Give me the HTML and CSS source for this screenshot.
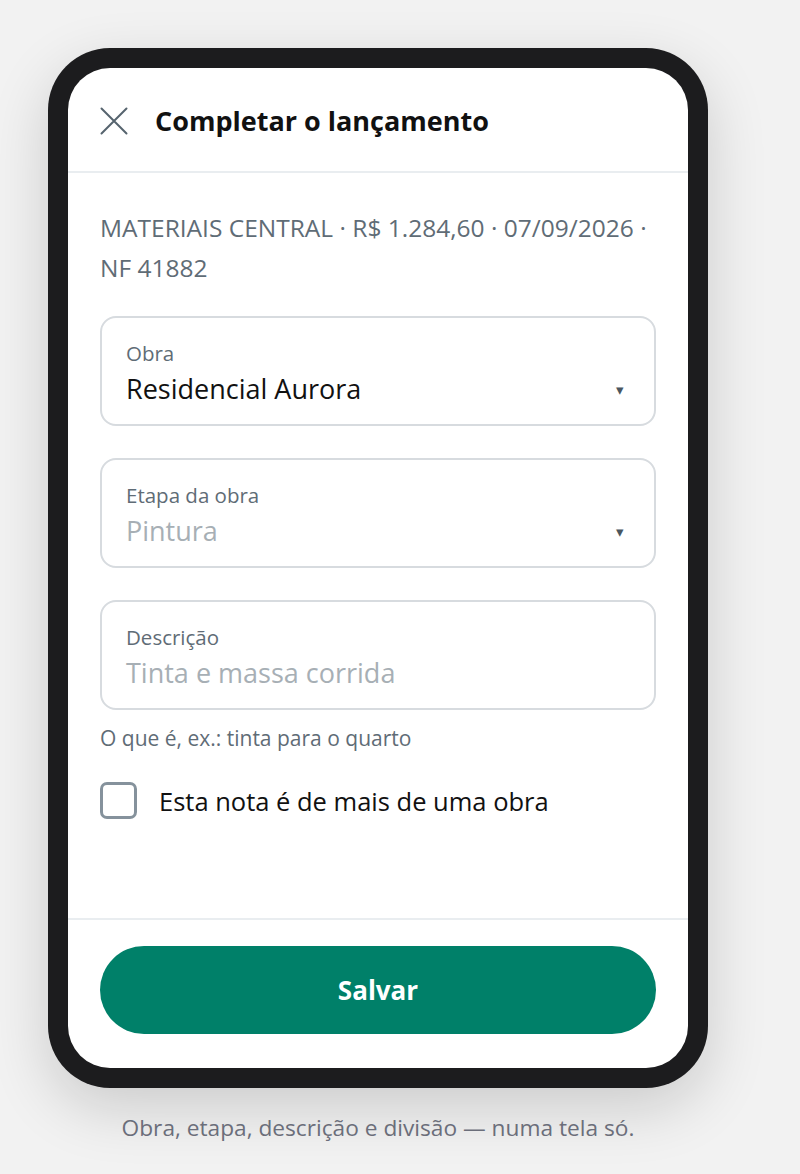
FILE: index.html
```html
<!DOCTYPE html>
<html lang="pt-BR">
<head>
    <meta charset="UTF-8">
    <meta name="viewport" content="width=device-width, initial-scale=1.0">
    <title>Completar o lançamento</title>
    <link rel="stylesheet" href="styles.css">
</head>
<body>

    <div class="stage">
        <div class="phone">
            <div class="screen">
                <header class="top-bar">
                    <button class="close-btn" aria-label="Fechar">
                        <svg width="28" height="28" viewBox="0 0 28 28">
                            <path d="M1.5 1.5 L26.5 26.5 M26.5 1.5 L1.5 26.5" stroke="#56646e" stroke-width="2" fill="none" stroke-linecap="round"/>
                        </svg>
                    </button>
                    <h1>Completar o lançamento</h1>
                </header>

                <main class="content">
                    <p class="summary">MATERIAIS CENTRAL · R$ 1.284,60 · 07/09/2026 · NF 41882</p>

                    <div class="field">
                        <span class="field-label">Obra</span>
                        <div class="field-row">
                            <span class="field-value">Residencial Aurora</span>
                            <span class="caret">▾</span>
                        </div>
                    </div>

                    <div class="field">
                        <span class="field-label">Etapa da obra</span>
                        <div class="field-row">
                            <span class="field-value placeholder">Pintura</span>
                            <span class="caret">▾</span>
                        </div>
                    </div>

                    <div class="field">
                        <span class="field-label">Descrição</span>
                        <div class="field-row">
                            <span class="field-value placeholder">Tinta e massa corrida</span>
                        </div>
                    </div>
                    <p class="hint">O que é, ex.: tinta para o quarto</p>

                    <label class="check-row">
                        <span class="checkbox"></span>
                        <span>Esta nota é de mais de uma obra</span>
                    </label>
                </main>

                <footer class="bottom-bar">
                    <button class="save-btn">Salvar</button>
                </footer>
            </div>
        </div>
        <p class="caption">Obra, etapa, descrição e divisão — numa tela só.</p>
    </div>

</body>
</html>
```

FILE: styles.css
```css
body {
    font-family: "Open Sans", "Noto Sans", sans-serif;
    margin: 0;
    padding: 0;
    background-color: #f2f2f2;
}

.stage {
    width: 660px;
    padding: 48px 0 40px 48px;
}

.phone {
    background-color: #1c1c1e;
    border-radius: 62px;
    padding: 20px;
    box-shadow: 0 20px 60px rgba(0, 0, 0, 0.16);
}

.screen {
    background-color: #fff;
    border-radius: 42px;
    height: 1000px;
    display: flex;
    flex-direction: column;
    overflow: hidden;
}

.top-bar {
    height: 101px;
    display: flex;
    align-items: center;
    gap: 27px;
    padding: 2px 32px 0;
    border-bottom: 2px solid #e9edf0;
}

.close-btn {
    background: none;
    border: none;
    padding: 0;
    width: 28px;
    height: 28px;
    cursor: pointer;
}

.top-bar h1 {
    margin: 0;
    font-size: 27px;
    font-weight: 700;
    color: #111;
}

.content {
    flex: 1;
    padding: 35px 32px 0;
}

.summary {
    margin: 0 0 28px;
    font-size: 24.5px;
    line-height: 40px;
    color: #5f6c76;
}

.field {
    border: 2px solid #d7dbdf;
    border-radius: 16px;
    height: 110px;
    box-sizing: border-box;
    padding: 22px 24px 0;
    margin-bottom: 32px;
}

.field-label {
    display: block;
    font-size: 20.5px;
    line-height: 26px;
    color: #5f6c76;
}

.field-row {
    display: flex;
    justify-content: space-between;
    align-items: center;
    margin-top: 5px;
}

.field-value {
    font-size: 27px;
    line-height: 36px;
    color: #111;
}

.field-value.placeholder {
    color: #a7afb5;
}

.caret {
    font-size: 15px;
    color: #4a5660;
    margin-right: 6px;
}

.hint {
    margin: -18px 0 30px;
    font-size: 21px;
    line-height: 28px;
    color: #5f6c76;
}

.check-row {
    display: flex;
    align-items: center;
    gap: 22px;
    font-size: 25.5px;
    color: #111;
    cursor: pointer;
}

.checkbox {
    width: 37px;
    height: 37px;
    flex-shrink: 0;
    box-sizing: border-box;
    border: 3px solid #85929c;
    border-radius: 7px;
}

.bottom-bar {
    border-top: 2px solid #e9edf0;
    padding: 26px 32px 34px;
}

.save-btn {
    width: 100%;
    height: 88px;
    border: none;
    border-radius: 44px;
    background-color: #008069;
    color: #fff;
    font-family: inherit;
    font-size: 26px;
    font-weight: 700;
    cursor: pointer;
}

.caption {
    margin: 24px 0 0;
    text-align: center;
    font-size: 22.7px;
    color: #6b6e7a;
}
```
